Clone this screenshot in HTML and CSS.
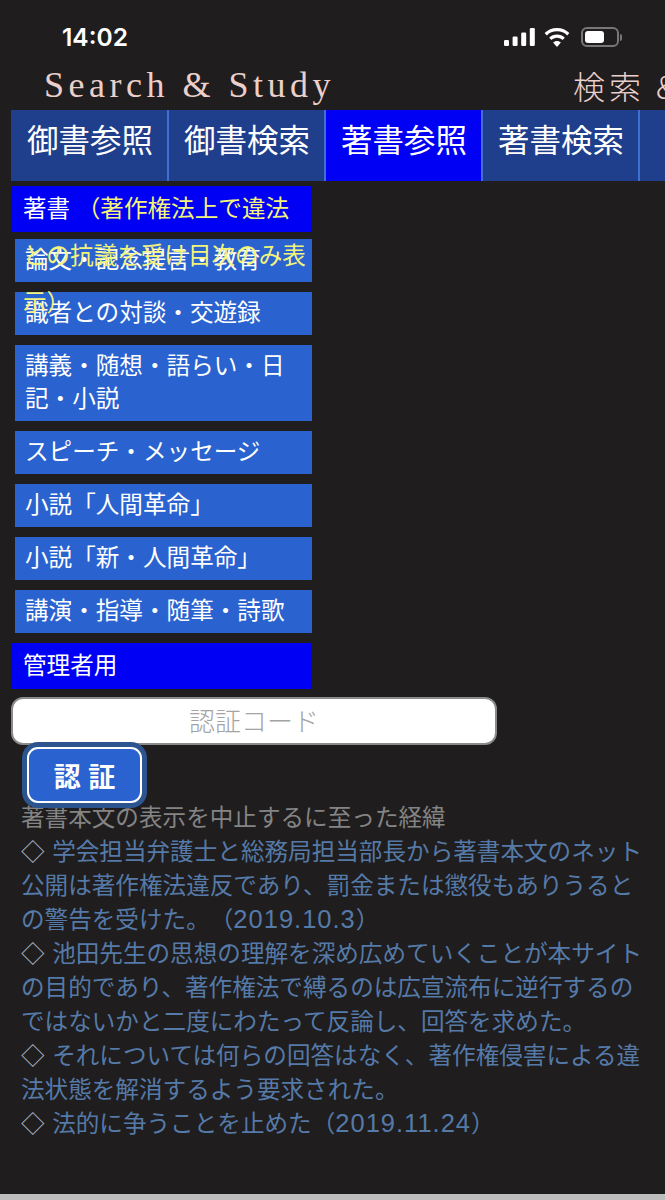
FILE: index.html
```html
<!DOCTYPE html>
<html lang="ja">
<head>
    <meta charset="UTF-8">
    <meta name="viewport" content="width=device-width, initial-scale=1.0">
    <title>Search &amp; Study</title>
    <link rel="stylesheet" href="styles.css">
</head>
<body>
    <div class="page">
        <div class="status">
            <span class="time">14:02</span>
            <div class="status-icons">
                <svg width="31" height="18" viewBox="0 0 31 18" fill="#fff">
                    <rect x="0" y="12" width="5" height="6" rx="1.2"/>
                    <rect x="8.6" y="8.5" width="5" height="9.5" rx="1.2"/>
                    <rect x="17.2" y="4.5" width="5" height="13.5" rx="1.2"/>
                    <rect x="25.8" y="0" width="5" height="18" rx="1.2"/>
                </svg>
                <svg width="26" height="19" viewBox="0 0 26 19" fill="#fff">
                    <path d="M13 0C8.2 0 3.8 1.9.6 5l2.2 2.4C5.4 4.800 9 3.300 13 3.300s7.600 1.500 10.200 4.100L25.400 5C22.200 1.900 17.800 0 13 0z"/>
                    <path d="M13 6.500c-3 0-5.800 1.200-7.800 3.200l2.300 2.400c1.400-1.400 3.400-2.300 5.500-2.300s4.100.9 5.500 2.300l2.300-2.400c-2-2-4.800-3.200-7.800-3.200z"/>
                    <path d="M13 13c-1.500 0-2.900.6-3.900 1.600L13 19l3.900-4.400c-1-1-2.400-1.600-3.900-1.600z"/>
                </svg>
                <div class="battery">
                    <div class="battery-body"><div class="battery-level"></div></div>
                    <div class="battery-cap"></div>
                </div>
            </div>
        </div>

        <div class="title-row">
            <span class="title">Search &amp; Study</span>
            <span class="title title-ja">検索 &amp;</span>
        </div>

        <div class="tabs">
            <div class="tab">御書参照</div>
            <div class="tab">御書検索</div>
            <div class="tab active">著書参照</div>
            <div class="tab">著書検索</div>
            <div class="tab"></div>
        </div>

        <div class="menu">
            <div class="menu-head">著書 <span class="head-note">（著作権法上で違法との抗議を受け目次のみ表示）</span></div>
            <div class="menu-item">論文・記念提言・教育</div>
            <div class="menu-item">識者との対談・交遊録</div>
            <div class="menu-item">講義・随想・語らい・日記・小説</div>
            <div class="menu-item">スピーチ・メッセージ</div>
            <div class="menu-item">小説「人間革命」</div>
            <div class="menu-item">小説「新・人間革命」</div>
            <div class="menu-item">講演・指導・随筆・詩歌</div>
            <div class="menu-head admin">管理者用</div>
        </div>

        <input class="code-input" type="text" placeholder="認証コード">
        <button class="auth-btn">認 証</button>

        <div class="notes">
            <p class="notes-title">著書本文の表示を中止するに至った経緯</p>
            <p><span class="mark">◇</span> 学会担当弁護士と総務局担当部長から著書本文のネット公開は著作権法違反であり、罰金または懲役もありうるとの警告を受けた。（<span class="date">2019.10.3</span>）</p>
            <p><span class="mark">◇</span> 池田先生の思想の理解を深め広めていくことが本サイトの目的であり、著作権法で縛るのは広宣流布に逆行するのではないかと二度にわたって反論し、回答を求めた。</p>
            <p><span class="mark">◇</span> それについては何らの回答はなく、著作権侵害による違法状態を解消するよう要求された。</p>
            <p><span class="mark">◇</span> 法的に争うことを止めた（<span class="date">2019.11.24</span>）</p>
        </div>
    </div>
    <div class="bottom-bar"></div>
</body>
</html>
```

FILE: styles.css
```css
html, body {
    margin: 0;
    padding: 0;
    height: 1200px;
    overflow: hidden;
    background: #1f1d1e;
    font-family: "Liberation Sans", "Noto Sans CJK JP", sans-serif;
    text-spacing-trim: space-all;
}
.page {
    height: 1194px;
    overflow: hidden;
}
.status {
    display: flex;
    justify-content: space-between;
    align-items: center;
    height: 74px;
    padding: 0 43px 0 62px;
    box-sizing: border-box;
}
.time {
    color: #fff;
    font-family: Inter, sans-serif;
    font-size: 24.5px;
    font-weight: 600;
}
.status-icons {
    display: flex;
    align-items: center;
    gap: 9px;
}
.battery {
    display: flex;
    align-items: center;
    margin-left: 2px;
}
.battery-body {
    width: 30px;
    height: 12px;
    padding: 2px;
    border: 2px solid #777;
    border-radius: 6px;
}
.battery-level {
    width: 19px;
    height: 12px;
    background: #fff;
    border-radius: 3px;
}
.battery-cap {
    width: 2px;
    height: 7px;
    margin-left: 1px;
    background: #777;
    border-radius: 0 2px 2px 0;
}
.title-row {
    display: flex;
    box-sizing: border-box;
    height: 36px;
    padding: 0 0 14px 44px;
    white-space: nowrap;
    align-items: center;
}
.title {
    color: #ebcfca;
    font-family: "Liberation Serif", serif;
    font-size: 36px;
    letter-spacing: 4.5px;
}
.title-ja {
    margin-left: 238px;
    font-family: "Noto Sans CJK JP", serif;
    font-size: 32px;
    font-weight: 300;
    letter-spacing: 4px;
}
.tabs {
    display: flex;
    margin: 0 0 0 11px;
    height: 71px;
}
.tab {
    flex: 0 0 157px;
    box-sizing: border-box;
    padding: 11px 0 0 15px;
    background: #1f3f8c;
    border-right: 2px solid #3f6fd0;
    color: #fff;
    font-size: 31.5px;
    line-height: 40px;
    white-space: nowrap;
}
.tab:first-child {
    flex-basis: 158px;
    padding-left: 16px;
}
.tab.active {
    background: #0000f5;
}
.menu {
    width: 301px;
    margin: 5px 0 0 11px;
}
.menu-head {
    height: 46px;
    padding: 0 4px 0 12px;
    background: #0000f5;
    color: #fff;
    font-size: 23.6px;
    line-height: 47px;
    position: relative;
    z-index: 1;
}
.head-note {
    color: #f4f47a;
}
.menu-item {
    margin: 7px 0 10px 4px;
    padding: 5px 9px 5px 10px;
    background: #2a63cf;
    color: #fff;
    font-size: 23.6px;
    line-height: 33px;
}
.menu-head.admin {
    margin-top: 10px;
}
.code-input {
    display: block;
    width: 486px;
    height: 48px;
    box-sizing: border-box;
    margin: 8px 0 0 11px;
    padding: 3px 0 0;
    border: 2px solid #8a8a8a;
    border-radius: 12px;
    background: #fff;
    font-family: inherit;
    font-size: 26px;
    font-weight: 300;
    text-align: center;
}
.code-input::placeholder {
    color: #a4a4a4;
}
.auth-btn {
    display: block;
    width: 115px;
    height: 56px;
    margin: 2px 0 -2px 27px;
    border: 2px solid #fff;
    border-radius: 11px;
    background: #2a63cf;
    box-shadow: 0 0 0 5px #2c5590;
    color: #fff;
    font-family: inherit;
    font-size: 27px;
    font-weight: 700;
    position: relative;
}
.notes {
    padding: 0 20px 0 21px;
    color: #557aa8;
    font-size: 23.6px;
    line-height: 34px;
}
.notes p {
    margin: 0;
}
.notes-title {
    color: #848484;
}
.mark {
    margin-right: 1px;
    color: #a8b4c4;
}
.date {
    font-size: 25.5px;
    letter-spacing: 1px;
    line-height: 1;
}
.bottom-bar {
    height: 6px;
    background: #bdbdbd;
}
```
